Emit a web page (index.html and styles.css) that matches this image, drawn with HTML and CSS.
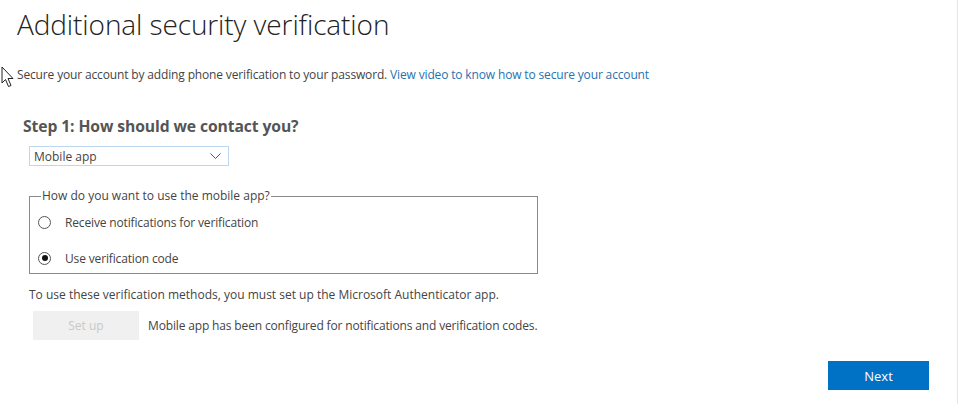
FILE: index.html
```html
<!DOCTYPE html>
<html>
<head>
<meta charset="utf-8">
<link rel="stylesheet" href="styles.css">
</head>
<body>
<div class="page">
  <h1 class="title">Additional security verification</h1>
  <p class="intro">Secure your account by adding phone verification to your password. <a class="link" href="#">View video to know how to secure your account</a></p>
  <h2 class="step">Step 1: How should we contact you?</h2>
  <div class="select">
    <span>Mobile app</span>
    <svg class="chev" width="11" height="7" viewBox="0 0 11 7"><path d="M0.5 0.5 L5.5 5.5 L10.5 0.5" fill="none" stroke="#555" stroke-width="1"/></svg>
  </div>
  <fieldset class="box">
    <legend class="legend">How do you want to use the mobile app?</legend>
    <div class="opts">
      <div class="opt">
        <span class="radio"></span>
        <span>Receive notifications for verification</span>
      </div>
      <div class="opt">
        <span class="radio on"></span>
        <span>Use verification code</span>
      </div>
    </div>
  </fieldset>
  <p class="note">To use these verification methods, you must set up the Microsoft Authenticator app.</p>
  <div class="setup-row">
    <span class="btn-setup">Set up</span>
    <span class="setup-msg">Mobile app has been configured for notifications and verification codes.</span>
  </div>
  <div class="actions">
    <span class="btn-next">Next</span>
  </div>
  <svg class="cursor" width="14" height="22" viewBox="0 0 14 22"><path d="M1 1 L1 17 L4.5 13.5 L7.5 20.5 L10 19.5 L7 12.5 L12 12.5 Z" fill="#fff" stroke="#222" stroke-width="1" stroke-linejoin="round"/></svg>
</div>
</body>
</html>
```
FILE: styles.css
```css
html, body {
  margin: 0;
  padding: 0;
  background: #fff;
}
.page {
  position: relative;
  width: 957px;
  height: 404px;
  border-right: 1px solid #e6e6e6;
  font-family: "Segoe UI", "Open Sans", "Noto Sans", sans-serif;
  color: #333;
  box-sizing: content-box;
  overflow: hidden;
}
.title {
  margin: 0;
  padding: 4px 0 0 17px;
  font-size: 28px;
  font-weight: 300;
  line-height: 40px;
  color: #222;
  letter-spacing: -0.1px;
}
.intro {
  margin: 22px 0 0 17px;
  font-size: 12px;
  line-height: 18px;
  color: #444;
  letter-spacing: -0.15px;
}
.link {
  color: #2672b0;
  text-decoration: none;
}
.step {
  margin: 32px 0 0 23px;
  font-size: 15.7px;
  font-weight: 700;
  line-height: 20px;
  color: #555;
  letter-spacing: -0.1px;
}
.select {
  margin: 10px 0 0 29px;
  width: 200px;
  height: 20px;
  box-sizing: border-box;
  border: 1px solid #bcd7ee;
  display: flex;
  align-items: center;
  justify-content: space-between;
  padding: 0 7px 0 4px;
  font-size: 12px;
  color: #444;
}
.chev { display: block; }
.box {
  margin: 23px 0 0 29px;
  width: 509px;
  box-sizing: border-box;
  border: 1px solid #8a8a8a;
  padding: 4px 0 0 8px;
  min-width: 0;
}
.legend {
  padding: 0 1px;
  margin-left: 3px;
  font-size: 12px;
  color: #444;
  line-height: 14px;
}
.opts {
  display: flex;
  flex-direction: column;
  gap: 6px;
}
.opt {
  display: flex;
  align-items: center;
  gap: 14px;
  height: 30px;
  font-size: 12px;
  color: #444;
  letter-spacing: -0.15px;
}
.radio {
  width: 13px;
  height: 13px;
  border: 1px solid #555;
  border-radius: 50%;
  box-sizing: border-box;
  display: flex;
  align-items: center;
  justify-content: center;
}
.radio.on::after {
  content: "";
  width: 6px;
  height: 6px;
  border-radius: 50%;
  background: #111;
}
.note {
  margin: 12px 0 0 29px;
  font-size: 12px;
  line-height: 18px;
  color: #444;
}
.setup-row {
  margin: 7px 0 0 33px;
  display: flex;
  align-items: center;
  gap: 9px;
}
.btn-setup {
  width: 106px;
  height: 29px;
  background: #f0f0f0;
  color: #c8c8c8;
  font-size: 12px;
  display: flex;
  align-items: center;
  justify-content: center;
}
.setup-msg {
  font-size: 12px;
  color: #444;
  letter-spacing: -0.15px;
}
.actions {
  display: flex;
  justify-content: flex-end;
  margin: 21px 28px 0 0;
}
.btn-next {
  width: 101px;
  height: 29px;
  background: #0072c6;
  color: #fff;
  font-size: 13px;
  display: flex;
  align-items: center;
  justify-content: center;
}
.cursor {
  position: absolute;
  left: 1px;
  top: 66px;
}
```
